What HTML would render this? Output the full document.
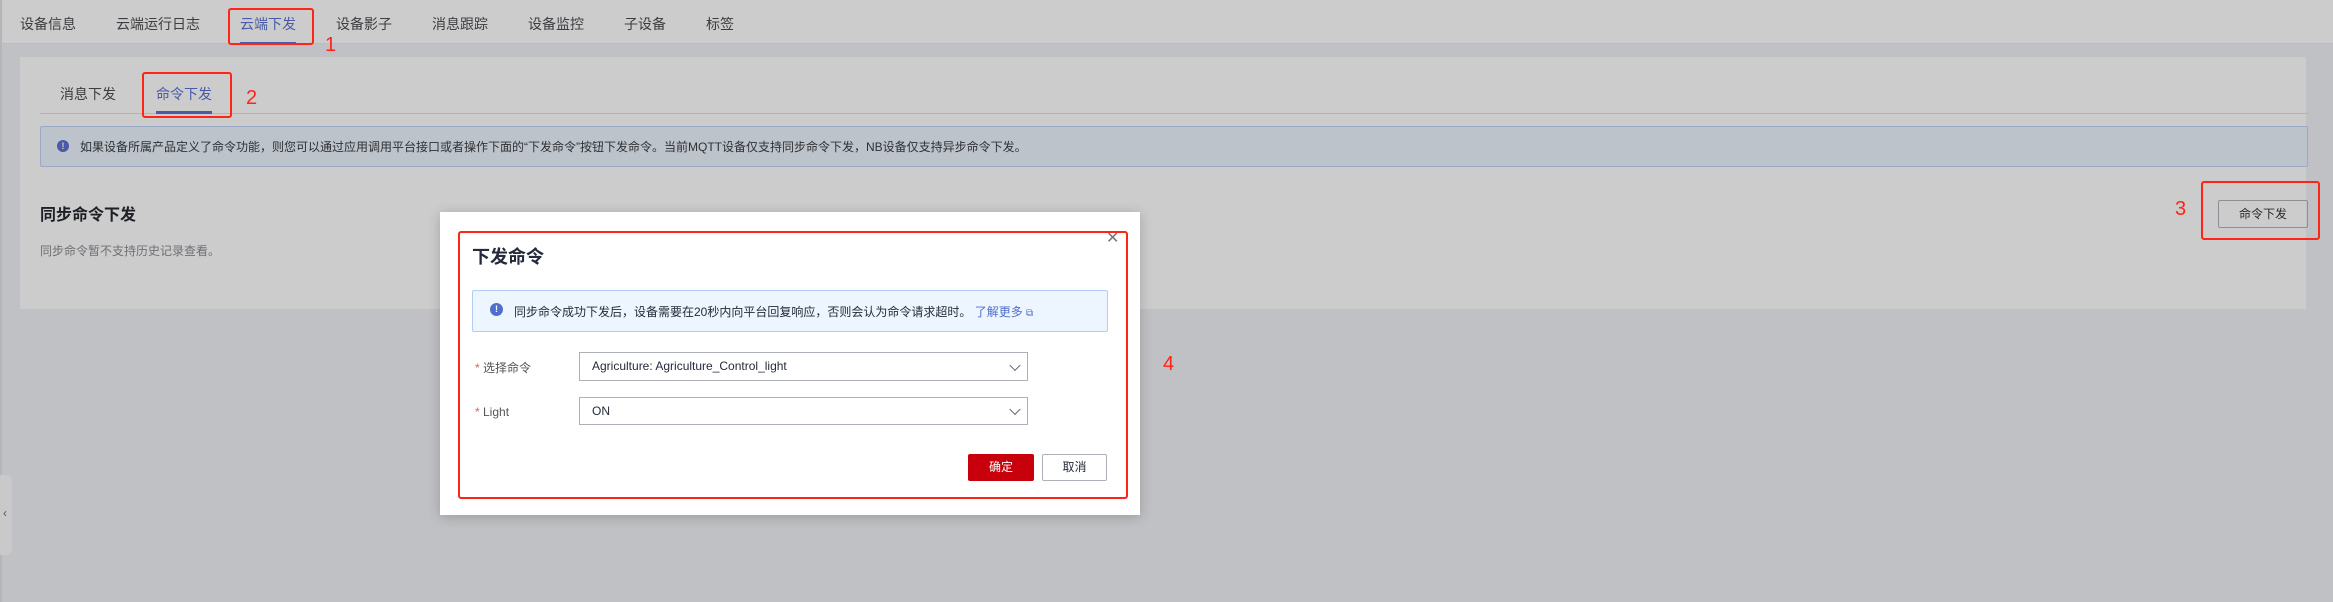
<!DOCTYPE html>
<html><head><meta charset="utf-8"><style>
*{margin:0;padding:0;box-sizing:border-box}
body{width:2333px;height:602px;overflow:hidden;background:#c0c1c4;font-family:"Liberation Sans","Noto Sans CJK SC",sans-serif;position:relative;color:#252b3a}
.a{position:absolute;white-space:nowrap}
.top{position:absolute;left:0;top:0;width:2333px;height:44px;background:#cccccc;border-bottom:1px solid #bdbdbd}
.tab{position:absolute;top:15px;font-size:14px;line-height:18px;color:#3c3d40}
.red{position:absolute;border:2px solid #ff2418;border-radius:3px}
.num{position:absolute;color:#ff2418;font-size:20px;line-height:20px}
.panel{position:absolute;left:20px;top:57px;width:2286px;height:252px;background:#cccccc}
.modal{position:absolute;left:440px;top:212px;width:700px;height:303px;background:#fff;box-shadow:0 2px 12px rgba(0,0,0,.2)}
.sel{position:absolute;left:579px;width:449px;border:1px solid #adb0b8;background:#fff;font-size:12px;color:#252b3a;padding-left:12px}
.chev{position:absolute;right:8px;top:50%;width:8px;height:8px;border-right:1px solid #5e6170;border-bottom:1px solid #5e6170;transform:translateY(-70%) rotate(45deg)}
</style></head><body>
<div class="top"></div>
<div class="tab" style="left:20px">设备信息</div>
<div class="tab" style="left:116px">云端运行日志</div>
<div class="tab" style="left:240px;color:#4a5aa8">云端下发</div>
<div class="a" style="left:240px;top:42px;width:56px;height:2px;background:#4a5aa8"></div>
<div class="tab" style="left:336px">设备影子</div>
<div class="tab" style="left:432px">消息跟踪</div>
<div class="tab" style="left:528px">设备监控</div>
<div class="tab" style="left:624px">子设备</div>
<div class="tab" style="left:706px">标签</div>
<div class="red" style="left:228px;top:8px;width:86px;height:37px"></div>
<div class="num" style="left:325px;top:35px">1</div>

<div class="panel"></div>
<div class="a" style="left:0;top:0;width:2px;height:602px;background:#b5b6b9"></div>
<div class="a" style="left:0;top:475px;width:12px;height:80px;background:#c9c9c9;border-radius:0 5px 5px 0"></div>
<div class="a" style="left:3px;top:506px;font-size:12px;color:#555">‹</div>

<div class="a" style="left:60px;top:84px;font-size:14px;color:#3c3d40">消息下发</div>
<div class="a" style="left:156px;top:84px;font-size:14px;color:#4a5aa8">命令下发</div>
<div class="a" style="left:40px;top:113px;width:2268px;height:1px;background:#b3b3b3"></div>
<div class="a" style="left:156px;top:111px;width:56px;height:3px;background:#4a5aa8"></div>
<div class="red" style="left:142px;top:72px;width:90px;height:46px"></div>
<div class="num" style="left:246px;top:88px">2</div>

<div class="a" style="left:40px;top:126px;width:2268px;height:41px;background:#bcc3cb;border:1px solid #9ba8c6;border-radius:2px"></div>
<div class="a" style="left:57px;top:140px;width:12px;height:12px;border-radius:50%;background:#4a5aa8;color:#ccc;font-size:9px;line-height:12px;text-align:center;font-weight:bold">!</div>
<div class="a" style="left:80px;top:138px;font-size:12px;color:#2f3033">如果设备所属产品定义了命令功能，则您可以通过应用调用平台接口或者操作下面的“下发命令”按钮下发命令。当前MQTT设备仅支持同步命令下发，NB设备仅支持异步命令下发。</div>

<div class="a" style="left:40px;top:201px;font-size:16px;font-weight:bold;color:#1e2026">同步命令下发</div>
<div class="a" style="left:40px;top:242px;font-size:12px;color:#6f7075">同步命令暂不支持历史记录查看。</div>

<div class="a" style="left:2218px;top:200px;width:90px;height:28px;border:1px solid #8e8f94;border-radius:2px;font-size:12px;line-height:26px;text-align:center;color:#2a2b30">命令下发</div>
<div class="red" style="left:2201px;top:181px;width:119px;height:59px"></div>
<div class="num" style="left:2175px;top:199px">3</div>

<div class="modal"></div>
<div class="a" style="left:472px;top:243px;font-size:18px;font-weight:bold;color:#252b3a">下发命令</div>
<div class="a" style="left:1106px;top:228px;font-size:16px;color:#777">✕</div>
<div class="a" style="left:472px;top:290px;width:636px;height:42px;background:#edf5fe;border:1px solid #b4cdf7;border-radius:2px"></div>
<div class="a" style="left:490px;top:303px;width:13px;height:13px;border-radius:50%;background:#526ecc;color:#fff;font-size:9px;line-height:13px;text-align:center;font-weight:bold">!</div>
<div class="a" style="left:514px;top:303px;font-size:12px;color:#252b3a">同步命令成功下发后，设备需要在20秒内向平台回复响应，否则会认为命令请求超时。 <span style="color:#526ecc">了解更多</span> <span style="color:#526ecc;font-size:10px">⧉</span></div>

<div class="a" style="left:475px;top:359px;font-size:12px;color:#555"><span style="color:#e55">*</span> 选择命令</div>
<div class="a" style="left:475px;top:405px;font-size:12px;color:#555"><span style="color:#e55">*</span> Light</div>
<div class="sel" style="top:352px;height:29px;line-height:27px">Agriculture: Agriculture_Control_light<div class="chev"></div></div>
<div class="sel" style="top:397px;height:28px;line-height:26px">ON<div class="chev"></div></div>

<div class="a" style="left:968px;top:454px;width:66px;height:27px;background:#c7000b;border-radius:2px;color:#fff;font-size:12px;line-height:27px;text-align:center">确定</div>
<div class="a" style="left:1042px;top:454px;width:65px;height:27px;border:1px solid #adb0b8;border-radius:2px;color:#252b3a;font-size:12px;line-height:25px;text-align:center">取消</div>

<div class="red" style="left:458px;top:231px;width:670px;height:268px"></div>
<div class="num" style="left:1163px;top:354px">4</div>
</body></html>
